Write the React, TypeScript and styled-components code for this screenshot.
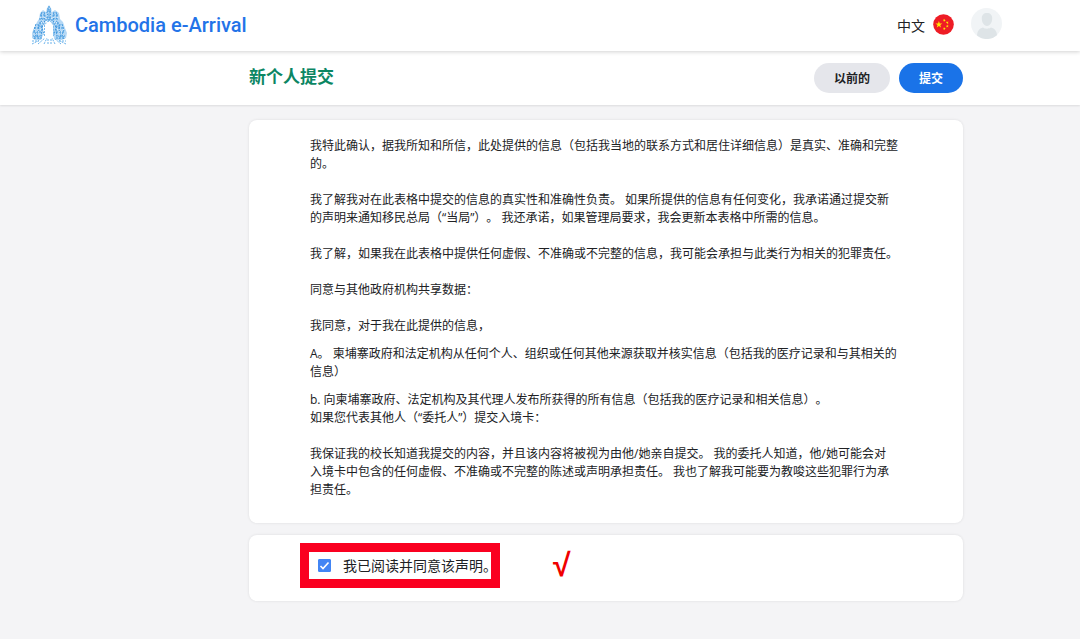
import React, { useState } from "react";
import styled, { createGlobalStyle } from "styled-components";

const GlobalStyle = createGlobalStyle`
  *, *::before, *::after { box-sizing: border-box; }
  body {
    margin: 0;
    background: #f4f4f6;
    color: #202124;
    font-family: "Open Sans", "Noto Sans CJK SC", sans-serif;
    font-size: 12px;
    line-height: 18px;
    text-spacing-trim: space-all;
  }
  h1, p { margin: 0; }
`;

const Page = styled.div`
  min-height: 100vh;
`;

const Header = styled.header`
  position: relative;
  display: flex;
  align-items: center;
  justify-content: space-between;
  height: 51px;
  padding: 0 78px 2px 31px;
  background: #fff;
  box-shadow: 0 1px 4px rgba(0, 0, 0, 0.18);
`;

const Brand = styled.a`
  display: flex;
  align-items: center;
  gap: 8px;
  color: #2373e8;
  font: 500 20px/24px Roboto, sans-serif;
  text-decoration: none;
`;

const Account = styled.div`
  display: flex;
  align-items: center;
  gap: 17px;
  padding-bottom: 2px;
`;

const RoundButton = styled.button`
  display: flex;
  align-items: center;
  gap: 8px;
  padding: 0;
  border: 0;
  background: none;
  color: #202124;
  font: 14px/20px "Noto Sans CJK SC", sans-serif;
  cursor: pointer;
`;

const LanguageButton = styled(RoundButton)`
  padding-top: 2px;
`;

const Toolbar = styled.div`
  display: flex;
  align-items: center;
  justify-content: space-between;
  height: 54px;
  padding: 0 117px 0 249px;
  background: #fff;
  box-shadow: 0 1px 2px rgba(0, 0, 0, 0.1);
`;

const Title = styled.h1`
  padding-bottom: 5px;
  color: #0b8663;
  font: 700 17px/24px "Noto Sans CJK SC", sans-serif;
`;

const Actions = styled.div`
  display: flex;
  gap: 9px;
`;

const Pill = styled.button<{ $primary?: boolean }>`
  height: 30px;
  padding: 0 20px;
  border: 0;
  border-radius: 15px;
  background: ${(p) => (p.$primary ? "#1a73e8" : "#e5e6eb")};
  color: ${(p) => (p.$primary ? "#fff" : "#202124")};
  font: 700 12px/18px "Noto Sans CJK SC", sans-serif;
  cursor: pointer;
`;

const Main = styled.main`
  display: flex;
  flex-direction: column;
  gap: 12px;
  padding: 15px 117px 38px 249px;
`;

const Card = styled.section`
  border-radius: 8px;
  background: #fff;
  box-shadow: 0 0 3px rgba(0, 0, 0, 0.1);
`;

const Declaration = styled(Card)`
  padding: 17px 60px 24px 61px;
`;

const Paragraph = styled.p<{ $gap?: number }>`
  margin-top: ${(p) => p.$gap ?? 0}px;
`;

const Agreement = styled(Card)`
  display: flex;
  align-items: center;
  gap: 53px;
  padding: 8px 51px 13px;
`;

const AgreeLabel = styled.label`
  display: flex;
  align-items: center;
  gap: 12px;
  width: 200px;
  height: 45px;
  padding: 0 0 1px 9px;
  border: 9px solid #fa0020;
  font: 14px/20px "Noto Sans CJK SC", sans-serif;
  white-space: nowrap;
  cursor: pointer;
`;

const TickBox = styled.span`
  display: grid;
  width: 13px;
  height: 13px;
  > * { grid-area: 1 / 1; }
  svg { pointer-events: none; }
`;

const Checkbox = styled.input`
  appearance: none;
  width: 13px;
  height: 13px;
  margin: 0;
  border: 1px solid #4285f4;
  border-radius: 1px;
  background: #fff;
  &:checked { background: #4285f4; }
`;

const Mark = styled.span`
  padding-bottom: 2px;
  color: #f00000;
  font: 700 32px/34px "Liberation Sans", sans-serif;
`;

function TempleLogo() {
  return (
    <svg width="36" height="40" viewBox="0 0 36 40" aria-hidden="true" fill="none">
      <path
        fill="#b5d8f5"
        d="M18 0l2 3 1 4 3-2 4 3 1 6 3 3 2 6 2 5-1 5-4 2h-7l-2-5V20l-3-4h-4l-3 4v10l-2 5H4l-3-2v-5l2-5 3-6 2-3 1-6 3-3 3 2 1-4z"
      />
      <g stroke="#3f97de" strokeDasharray="2 1">
        <path d="M18 1v4M16 4h4M15 7h6M16 9l4 3M20 9l-4 3M15 13h6M14 15h8M17 5v10M19 5v10" />
        <path d="M11 7l-1 4 1 4-2 4 2 5-1 8M13 7l1 4-1 4 1 3-3 4 2 8M9 10h5M8 14h6M8 18h5M7 21h5" />
        <path d="M25 7l1 4-1 4 2 4-2 5 1 8M23 7l-1 4 1 4-1 3 3 4-2 8M22 10h5M22 14h6M23 18h5M24 21h5" />
        <path d="M5 19l-2 6 2 4-2 5M7 19l1 6-2 4 2 5M3 23h6M2 27h9M2 31h8M3 33h8" />
        <path d="M31 19l2 6-2 4 2 5M29 19l-1 6 2 4-2 5M27 23h6M25 27h9M26 31h8M25 33h8" />
      </g>
      <g stroke="#e9f4fc" strokeDasharray="1 2">
        <path d="M15 6l6 8M21 6l-6 8M9 12l5 8M14 12l-5 8M27 12l-5 8M22 12l5 8M3 24l8 9M10 24l-8 8M33 24l-8 9M26 24l8 8" />
      </g>
      <path fill="#fff" d="M14 31V20l2-3h4l2 3v11z" />
      <path stroke="#79baed" strokeDasharray="2 1" d="M13.500 31V20l3-3.500h3l3 3.500v11" />
      <path
        stroke="#69b2eb"
        strokeDasharray="2 1"
        d="M1 36h7M28 36h7M1 39l8-4M7 39l7-6M13 39l3-6M17 39v-5M20 39v-5M24 39l-3-6M30 39l-7-6M35 39l-8-4"
      />
    </svg>
  );
}

const STAR = "M0-1L.24-.31.95-.31.38.12.59.81 0 .4-.59.81-.38.12-.95-.31-.24-.31Z";

function Flag() {
  return (
    <svg width="21" height="21" viewBox="0 0 21 21" aria-hidden="true">
      <circle cx="10.500" cy="10.500" r="10.300" fill="#ee1c25" />
      <g fill="#ffec00">
        <path d={STAR} transform="translate(5.900 10.500) scale(3.600)" />
        <path d={STAR} transform="translate(11.300 6.300) rotate(20) scale(1.600)" />
        <path d={STAR} transform="translate(14.300 8.600) rotate(40) scale(1.600)" />
        <path d={STAR} transform="translate(14.300 12.200) scale(1.600)" />
        <path d={STAR} transform="translate(11.300 14.700) rotate(20) scale(1.600)" />
      </g>
    </svg>
  );
}

function Avatar() {
  return (
    <svg width="31" height="31" viewBox="0 0 31 31" aria-hidden="true">
      <circle cx="15.500" cy="15.500" r="15.500" fill="#f1f4f6" />
      <path
        fill="#dee4e7"
        d="M16 5c3.300 0 5.200 2 5.200 5.300 0 4-2 7.700-5.200 7.700s-5.200-3.700-5.200-7.700C10.800 7 12.700 5 16 5zM6 27.600c.3-4.600 2.200-6.800 6-8 1.200.8 2.400 1.200 4 1.200s2.800-.4 4-1.200c3.800 1.200 5.700 3.400 6 7.600A15.500 15.500 0 0 1 6 27.600z"
      />
    </svg>
  );
}

export default function App() {
  const [agreed, setAgreed] = useState(true);
  return (
    <Page lang="zh-CN">
      <GlobalStyle />
      <Header>
        <Brand href="#">
          <TempleLogo />
          Cambodia e-Arrival
        </Brand>
        <Account>
          <LanguageButton type="button">
            中文
            <Flag />
          </LanguageButton>
          <RoundButton type="button" aria-label="账户">
            <Avatar />
          </RoundButton>
        </Account>
      </Header>
      <Toolbar>
        <Title>新个人提交</Title>
        <Actions>
          <Pill type="button">以前的</Pill>
          <Pill type="button" $primary>
            提交
          </Pill>
        </Actions>
      </Toolbar>
      <Main>
        <Declaration>
          <Paragraph>
            我特此确认，据我所知和所信，此处提供的信息（包括我当地的联系方式和居住详细信息）是真实、准确和完整的。
          </Paragraph>
          <Paragraph $gap={18}>
            我了解我对在此表格中提交的信息的真实性和准确性负责。 如果所提供的信息有任何变化，我承诺通过提交新
            <br />
            的声明来通知移民总局（“当局”）。 我还承诺，如果管理局要求，我会更新本表格中所需的信息。
          </Paragraph>
          <Paragraph $gap={18}>
            我了解，如果我在此表格中提供任何虚假、不准确或不完整的信息，我可能会承担与此类行为相关的犯罪责任。
          </Paragraph>
          <Paragraph $gap={18}>同意与其他政府机构共享数据：</Paragraph>
          <Paragraph $gap={18}>我同意，对于我在此提供的信息，</Paragraph>
          <Paragraph $gap={10}>
            A。 柬埔寨政府和法定机构从任何个人、组织或任何其他来源获取并核实信息（包括我的医疗记录和与其相关的
            <br />
            信息）
          </Paragraph>
          <Paragraph $gap={10}>
            b. 向柬埔寨政府、法定机构及其代理人发布所获得的所有信息（包括我的医疗记录和相关信息）。
          </Paragraph>
          <Paragraph>如果您代表其他人（“委托人”）提交入境卡：</Paragraph>
          <Paragraph $gap={18}>
            我保证我的校长知道我提交的内容，并且该内容将被视为由他/她亲自提交。 我的委托人知道，他/她可能会对
            <br />
            入境卡中包含的任何虚假、不准确或不完整的陈述或声明承担责任。 我也了解我可能要为教唆这些犯罪行为承
            <br />
            担责任。
          </Paragraph>
        </Declaration>
        <Agreement>
          <AgreeLabel>
            <TickBox>
              <Checkbox type="checkbox" checked={agreed} onChange={(e) => setAgreed(e.target.checked)} />
              <svg width="13" height="13" viewBox="0 0 13 13" aria-hidden="true">
                <path d="M2.500 7l2.500 2.500 5.500-6" fill="none" stroke="#fff" strokeWidth="1.600" />
              </svg>
            </TickBox>
            我已阅读并同意该声明。
          </AgreeLabel>
          <Mark>√</Mark>
        </Agreement>
      </Main>
    </Page>
  );
}
